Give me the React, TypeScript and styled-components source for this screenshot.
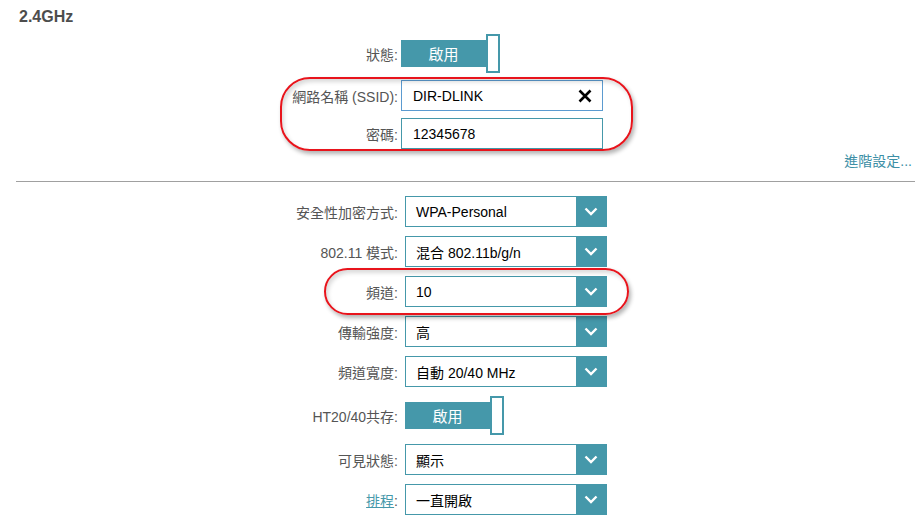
import React from "react";
import styled, { createGlobalStyle } from "styled-components";

const TEAL = "#4598aa";
const FONT = `"Liberation Sans", Arial, "Noto Sans CJK TC", sans-serif`;

const Global = createGlobalStyle`
  html, body { margin: 0; padding: 0; background: #fff; }
  body { font-family: ${FONT}; width: 919px; height: 531px; overflow: hidden; }
`;

const Page = styled.div`
  display: flex;
  flex-direction: column;
  padding-top: 8px;
`;

const Title = styled.div`
  font-size: 16px;
  line-height: 18px;
  font-weight: bold;
  color: #4d4d4d;
  padding-left: 19px;
`;

const Section = styled.div<{ $gap: number; $top: number }>`
  display: flex;
  flex-direction: column;
  gap: ${(p) => p.$gap}px;
  margin-top: ${(p) => p.$top}px;
`;

const Group = styled.div<{ $gap: number }>`
  position: relative;
  display: flex;
  flex-direction: column;
  gap: ${(p) => p.$gap}px;
`;

const Row = styled.div<{ $offset: number }>`
  display: flex;
  align-items: center;
  gap: ${(p) => p.$offset}px;
`;

const Label = styled.div`
  width: 398px;
  text-align: right;
  font-size: 14px;
  color: #555;
  white-space: nowrap;
`;

const LabelLink = styled.a`
  color: ${TEAL};
  text-decoration: underline;
`;

const Toggle = styled.div`
  display: flex;
  align-items: center;
  height: 39px;
`;

const ToggleBar = styled.div`
  width: 85px;
  height: 27px;
  background: ${TEAL};
  color: #fff;
  font-size: 15px;
  display: flex;
  align-items: center;
  justify-content: center;
`;

const ToggleKnob = styled.div`
  box-sizing: border-box;
  width: 14px;
  height: 39px;
  background: #fff;
  border: 2px solid ${TEAL};
`;

const Input = styled.div<{ $focus?: boolean }>`
  box-sizing: border-box;
  width: 202px;
  height: 31px;
  border: 1px solid ${(p) => (p.$focus ? "#5b9bd0" : TEAL)};
  display: flex;
  align-items: center;
  justify-content: space-between;
  padding: 0 10px 0 11px;
  font-size: 14px;
  color: #000;
`;

const Select = styled.div`
  box-sizing: border-box;
  width: 202px;
  height: 31px;
  border: 1px solid ${TEAL};
  display: flex;
  align-items: stretch;
  font-size: 14px;
  color: #000;
`;

const SelectText = styled.div`
  flex: 1;
  display: flex;
  align-items: center;
  padding-left: 10px;
`;

const SelectButton = styled.div`
  width: 30px;
  background: ${TEAL};
  display: flex;
  align-items: center;
  justify-content: center;
`;

const LinkRow = styled.div`
  margin-top: 4px;
  text-align: right;
  padding-right: 7px;
  font-size: 14px;
  line-height: 16px;
`;

const MoreLink = styled.a`
  color: #3d8fa6;
  text-decoration: none;
`;

const Divider = styled.div`
  margin: 12px 4px 0 16px;
  height: 1px;
  background: #a0a0a0;
`;

const Annotation = styled.div<{ $l: number; $t: number; $w: number; $h: number; $r: number }>`
  position: absolute;
  left: ${(p) => p.$l}px;
  top: ${(p) => p.$t}px;
  width: ${(p) => p.$w}px;
  height: ${(p) => p.$h}px;
  box-sizing: border-box;
  border: 2px solid #e8141c;
  border-radius: ${(p) => p.$r}px;
  box-shadow: 2px 3px 4px rgba(0, 0, 0, 0.3), inset 2px 3px 4px rgba(0, 0, 0, 0.15);
  pointer-events: none;
`;

const Chevron = () => (
  <svg width="14" height="9" viewBox="0 0 14 9">
    <path d="M1.5 1.5 L7 7 L12.5 1.5" fill="none" stroke="#fff" strokeWidth="2.4" />
  </svg>
);

const ClearIcon = () => (
  <svg width="14" height="14" viewBox="0 0 14 14">
    <path d="M1.5 1.5 L12.5 12.5 M12.5 1.5 L1.5 12.5" stroke="#000" strokeWidth="2.6" />
  </svg>
);

const SwitchControl = ({ text }: { text: string }) => (
  <Toggle>
    <ToggleBar>{text}</ToggleBar>
    <ToggleKnob />
  </Toggle>
);

const SelectControl = ({ value }: { value: string }) => (
  <Select>
    <SelectText>{value}</SelectText>
    <SelectButton>
      <Chevron />
    </SelectButton>
  </Select>
);

export default function App() {
  return (
    <>
      <Global />
      <Page>
        <Title>2.4GHz</Title>
        <Section $gap={7} $top={8}>
          <Row $offset={3}>
            <Label>狀態:</Label>
            <SwitchControl text="啟用" />
          </Row>
          <Group $gap={7}>
            <Row $offset={3}>
              <Label>網路名稱 (SSID):</Label>
              <Input $focus>
                <span>DIR-DLINK</span>
                <ClearIcon />
              </Input>
            </Row>
            <Row $offset={3}>
              <Label>密碼:</Label>
              <Input>12345678</Input>
            </Row>
            <Annotation $l={280} $t={-3} $w={353} $h={74} $r={30} />
          </Group>
        </Section>
        <LinkRow>
          <MoreLink href="#">進階設定...</MoreLink>
        </LinkRow>
        <Divider />
        <Section $gap={9} $top={14}>
          <Row $offset={7}>
            <Label>安全性加密方式:</Label>
            <SelectControl value="WPA-Personal" />
          </Row>
          <Row $offset={7}>
            <Label>802.11 模式:</Label>
            <SelectControl value="混合 802.11b/g/n" />
          </Row>
          <Group $gap={0}>
            <Row $offset={7}>
              <Label>頻道:</Label>
              <SelectControl value="10" />
            </Row>
            <Annotation $l={324} $t={-8} $w={305} $h={47} $r={24} />
          </Group>
          <Row $offset={7}>
            <Label>傳輸強度:</Label>
            <SelectControl value="高" />
          </Row>
          <Row $offset={7}>
            <Label>頻道寬度:</Label>
            <SelectControl value="自動 20/40 MHz" />
          </Row>
          <Row $offset={7}>
            <Label>HT20/40共存:</Label>
            <SwitchControl text="啟用" />
          </Row>
          <Row $offset={7}>
            <Label>可見狀態:</Label>
            <SelectControl value="顯示" />
          </Row>
          <Row $offset={7}>
            <Label>
              <LabelLink href="#">排程</LabelLink>:
            </Label>
            <SelectControl value="一直開啟" />
          </Row>
        </Section>
      </Page>
    </>
  );
}
